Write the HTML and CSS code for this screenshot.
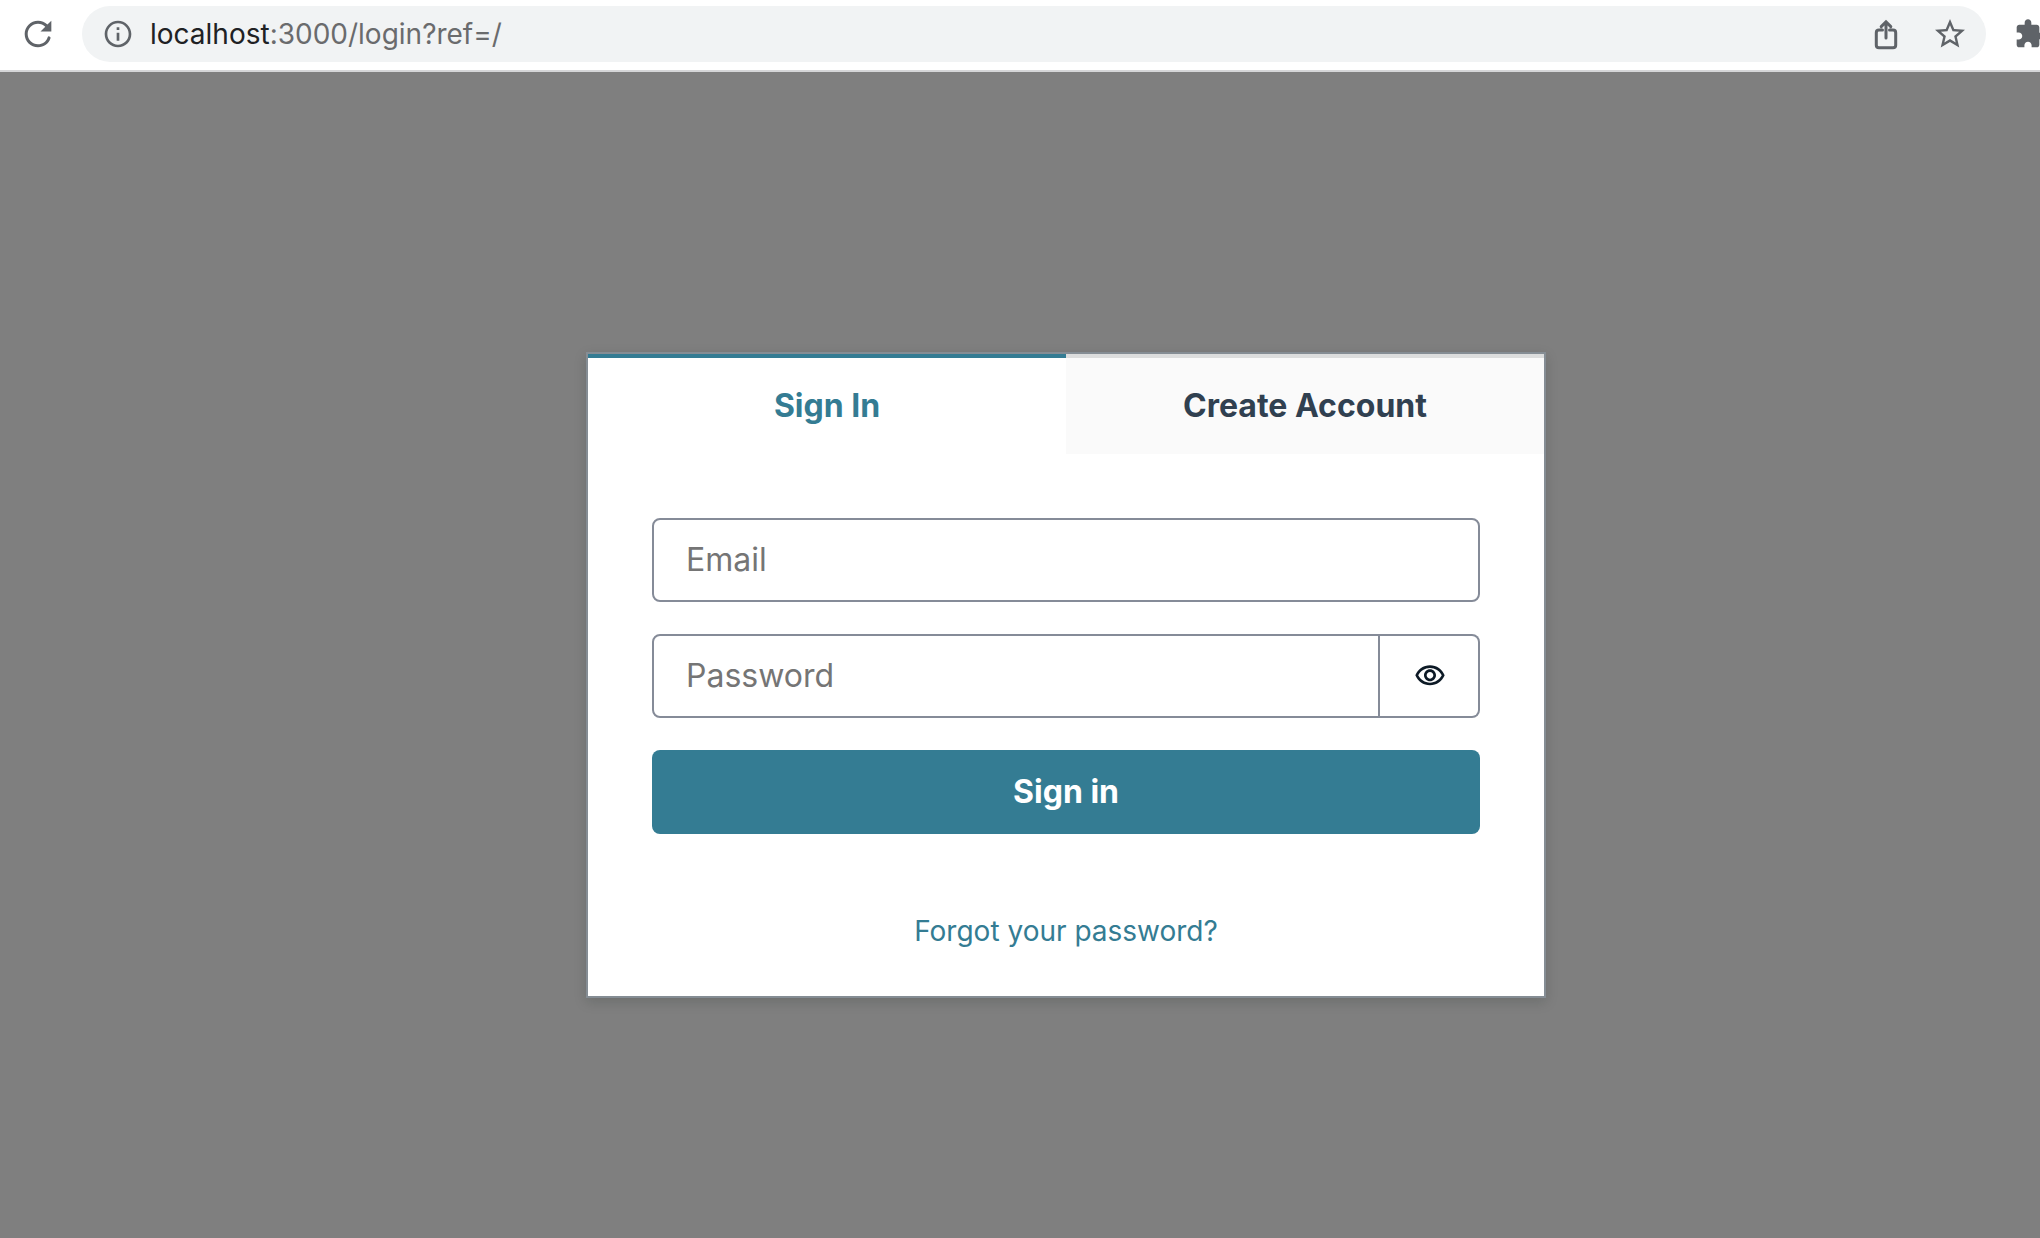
FILE: index.html
```html
<!DOCTYPE html>
<html lang="en">

<head>
    <meta charset="UTF-8">
    <title>Sign In</title>

    <link rel="stylesheet" href="styles.css">
</head>

<body>
    <header class="toolbar">
        <button class="icon-button reload" type="button" aria-label="Reload">
            <svg width="40" height="40" viewBox="0 0 24 24">
                <path d="M17.65 6.35C16.2 4.9 14.21 4 12 4c-4.42 0-7.99 3.58-7.99 8s3.57 8 7.99 8c3.5 0 6.5-2.2 7.5-5.4a.9.9 0 0 0-1.75-.5C17 16.6 14.7 18.2 12 18.2c-3.4 0-6.2-2.8-6.2-6.2s2.8-6.2 6.2-6.2c1.71 0 3.24.71 4.36 1.84L13.5 10.5H20V4l-2.35 2.35z" />
            </svg>
        </button>
        <div class="address-bar">
            <svg width="32" height="32" viewBox="0 0 24 24">
                <path d="M11 7h2v2h-2zm0 4h2v6h-2zm1-9C6.48 2 2 6.48 2 12s4.48 10 10 10 10-4.48 10-10S17.52 2 12 2zm0 18c-4.41 0-8-3.59-8-8s3.59-8 8-8 8 3.59 8 8-3.59 8-8 8z" />
            </svg>
            <p class="url"><span class="host">localhost</span>:3000/login?ref=/</p>
            <button class="icon-button" type="button" aria-label="Share">
                <svg class="outline" width="32" height="32" viewBox="0 0 32 32">
                    <path d="M12.5 12H9q-2.7 0-2.7 2.7v12.6q0 2.5 2.7 2.5h14q2.7 0 2.7-2.5V14.7q0-2.7-2.7-2.7h-3.5M16 20V4M11.200 8.600l4.800-4.800 4.800 4.800" />
                </svg>
            </button>
            <button class="icon-button" type="button" aria-label="Bookmark">
                <svg width="36" height="36" viewBox="0 0 24 24">
                    <path d="M22 9.24l-7.19-.62L12 2 9.19 8.63 2 9.24l5.46 4.73L5.82 21 12 17.27 18.18 21l-1.63-7.03L22 9.24zM12 15.4l-3.76 2.27 1-4.28-3.32-2.88 4.38-.38L12 6.1l1.71 4.04 4.38.38-3.32 2.88 1 4.28L12 15.4z" />
                </svg>
            </button>
        </div>
        <button class="icon-button extensions" type="button" aria-label="Extensions">
            <svg width="32" height="32" viewBox="0 0 24 24">
                <path d="M20.5 11H19V7c0-1.1-.9-2-2-2h-4V3.5C13 2.12 11.88 1 10.5 1S8 2.12 8 3.5V5H4c-1.1 0-1.99.9-1.99 2v3.8H3.5c1.49 0 2.7 1.21 2.7 2.7s-1.21 2.7-2.7 2.7H2V20c0 1.1.9 2 2 2h3.8v-1.5c0-1.49 1.21-2.7 2.7-2.7s2.7 1.21 2.7 2.7V22H17c1.1 0 2-.9 2-2v-4h1.5c1.38 0 2.5-1.12 2.5-2.5S21.88 11 20.5 11z" />
            </svg>
        </button>
    </header>

    <main class="page">
        <section class="card">
            <div class="tabs" role="tablist">
                <button class="tab active" type="button" role="tab" aria-selected="true">Sign In</button>
                <button class="tab" type="button" role="tab" aria-selected="false">Create Account</button>
            </div>
            <form class="login-form">
                <input class="field" type="email" placeholder="Email" aria-label="Email">
                <div class="password-row">
                    <input class="field" type="password" placeholder="Password" aria-label="Password">
                    <button class="show-password" type="button" aria-label="Show password">
                        <svg width="32" height="32" viewBox="0 0 24 24">
                            <path d="M12 6c3.79 0 7.17 2.13 8.82 5.5C19.17 14.87 15.79 17 12 17s-7.17-2.13-8.82-5.5C4.83 8.13 8.21 6 12 6m0-2C7 4 2.73 7.11 1 11.5 2.73 15.89 7 19 12 19s9.27-3.11 11-7.5C21.27 7.11 17 4 12 4zm0 5c1.38 0 2.5 1.12 2.5 2.5S13.38 14 12 14s-2.5-1.12-2.5-2.5S10.62 9 12 9m0-2c-2.48 0-4.5 2.02-4.5 4.5S9.52 16 12 16s4.5-2.02 4.5-4.5S14.48 7 12 7z" />
                        </svg>
                    </button>
                </div>
                <button class="submit" type="submit">Sign in</button>
            </form>
            <div class="card-footer">
                <a href="#">Forgot your password?</a>
            </div>
        </section>
    </main>
</body>

</html>
```
FILE: styles.css
```css
* {
    box-sizing: border-box;
}

body {
    display: flex;
    flex-direction: column;
    min-height: 100vh;
    margin: 0;
    font-family: Inter, sans-serif;
    background-color: #7f7f7f;
    overflow-x: hidden;
}

button,
input {
    margin: 0;
    font: inherit;
}

button {
    cursor: pointer;
}

svg {
    display: block;
    flex: none;
    fill: currentColor;
}

.outline {
    fill: none;
    stroke: currentColor;
    stroke-width: 3;
    stroke-linecap: round;
}

/* browser toolbar */
.toolbar {
    display: flex;
    align-items: center;
    height: 72px;
    padding: 0 0 2px 18px;
    border-bottom: 2px solid #d5d6d8;
    background-color: #fff;
    color: #5f6368;
}

.icon-button {
    display: block;
    flex: none;
    padding: 0;
    border: 0;
    background: none;
    color: inherit;
}

.address-bar {
    display: flex;
    flex: 1;
    align-items: center;
    height: 56px;
    margin-left: 24px;
    padding: 0 18px 0 20px;
    border-radius: 28px;
    background-color: #f1f3f4;
}

.url {
    flex: 1;
    margin: 0 0 0 16px;
    font-size: 28px;
    line-height: 32px;
    color: #6a6b6d;
}

.host {
    color: #202124;
}

.address-bar .icon-button + .icon-button {
    margin-left: 30px;
}

.extensions {
    width: 54px;
    padding-left: 28px;
}

/* login card */
.page {
    display: flex;
    flex: 1;
    align-items: center;
    justify-content: center;
    padding: 40px 0 0 92px;
}

.card {
    width: 960px;
    max-width: 100%;
    border: 2px solid #858d94;
    background-color: #fff;
    box-shadow: 0 4px 12px rgba(13, 26, 20, 0.16);
}

.tabs {
    display: flex;
}

.tab {
    flex: 1;
    height: 100px;
    padding: 0 32px;
    border: 0;
    border-top: 4px solid #dcdddd;
    background-color: #fafafa;
    font-size: 32px;
    font-weight: 700;
    line-height: 48px;
    color: #304050;
}

.tab.active {
    border-color: #347c93;
    background-color: #fff;
    color: #347c93;
}

.login-form {
    display: flex;
    flex-direction: column;
    gap: 32px;
    padding: 64px;
}

.field {
    width: 100%;
    height: 84px;
    padding: 15px 32px 17px;
    border: 2px solid #858b98;
    border-radius: 8px;
    background-color: #fff;
    font-size: 32px;
    color: #304050;
}

.field::placeholder {
    color: #757575;
}

.password-row {
    display: flex;
}

.password-row .field {
    flex: 1;
    border-radius: 8px 0 0 8px;
}

.show-password {
    display: flex;
    flex: none;
    align-items: center;
    justify-content: center;
    width: 100px;
    padding: 0 0 0 2px;
    border: 2px solid #858b98;
    border-left: 0;
    border-radius: 0 8px 8px 0;
    background-color: #fff;
    color: #0d1a26;
}

.submit {
    height: 84px;
    padding: 0 32px 2px;
    border: 0;
    border-radius: 8px;
    background-color: #347c93;
    font-size: 32px;
    font-weight: 700;
    color: #fff;
}

.card-footer {
    padding: 12px 32px 44px;
    text-align: center;
}

.card-footer a {
    font-size: 28px;
    line-height: 42px;
    color: #347c93;
    text-decoration: none;
}
```
